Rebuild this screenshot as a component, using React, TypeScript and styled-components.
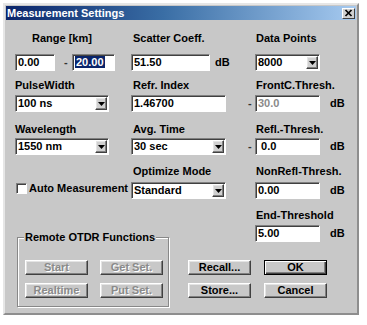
import React from 'react';
import styled, { createGlobalStyle, css } from 'styled-components';

const FONT = `"Liberation Sans", Arial, sans-serif`;

const Global = createGlobalStyle`
  html, body { margin: 0; padding: 0; background: #ffffff; }
  body { font-family: ${FONT}; font-size: 11px; }
  * { box-sizing: border-box; }
`;

const Page = styled.div`
  padding: 3px 0 0 3px;
`;

const Window = styled.div`
  width: 356px;
  border: 2px solid;
  border-color: #e6e6e6 #8e8e8e #8e8e8e #e6e6e6;
  padding: 1px;
  background: #c8c8c8;
`;

const TitleBar = styled.div`
  height: 14px;
  display: flex;
  align-items: center;
  justify-content: space-between;
  background: linear-gradient(to right, #0a246a 0%, #3a6ea5 45%, #a6caf0 100%);
  padding: 0 1px 0 1px;
`;

const TitleText = styled.span`
  color: #ffffff;
  font: bold 11px/14px ${FONT};
  padding-left: 0;
`;

const CloseBtn = styled.div`
  width: 13px;
  height: 11px;
  background: #d0d0d0;
  border: 1px solid;
  border-color: #ffffff #404040 #404040 #ffffff;
  display: flex;
  align-items: center;
  justify-content: center;
`;

const Body = styled.div`
  padding: 12px 0 5px 9px;
`;

const Grid = styled.div`
  display: grid;
  grid-template-columns: 116px 117px 1fr;
  grid-template-rows: 47px 44px 42px 34px;
`;

const Field = styled.div`
  display: flex;
  flex-direction: column;
  align-items: flex-start;
`;

const Label = styled.div<{ $indent?: number; $gap: number }>`
  height: 13px;
  font: bold 11px/13px ${FONT};
  color: #000;
  white-space: nowrap;
  margin-left: ${(p) => p.$indent ?? 0}px;
  margin-bottom: ${(p) => p.$gap}px;
`;

const Line = styled.div`
  display: flex;
  align-items: center;
  height: 17px;
`;

const sunken = css`
  border: 1px solid;
  border-color: #808080 #ffffff #ffffff #808080;
  box-shadow: inset 1px 1px 0 #404040;
`;

const raised = css`
  border: 1px solid;
  border-color: #ffffff #404040 #404040 #ffffff;
  box-shadow: inset -1px -1px 0 #808080, inset 1px 1px 0 #e4e4e4;
`;

const TextBox = styled.div<{ $w: number; $disabled?: boolean }>`
  width: ${(p) => p.$w}px;
  height: 17px;
  ${sunken};
  background: #ffffff;
  font: bold 11px/15px ${FONT};
  color: ${(p) => (p.$disabled ? '#8a8a8a' : '#000')};
  padding-left: 2px;
  white-space: nowrap;
  overflow: hidden;
`;

const Selected = styled.span`
  background: #0a246a;
  color: #ffffff;
  padding: 0 1px;
`;

const SelectBox = styled.div<{ $w: number }>`
  width: ${(p) => p.$w}px;
  height: 17px;
  ${sunken};
  background: #ffffff;
  display: flex;
  align-items: stretch;
  padding: 1px 1px 1px 0;
`;

const SelectText = styled.div`
  flex: 1;
  font: bold 11px/13px ${FONT};
  color: #000;
  padding-left: 2px;
  white-space: nowrap;
`;

const DropBtn = styled.div`
  width: 12px;
  background: #d0d0d0;
  ${raised};
  display: flex;
  align-items: center;
  justify-content: center;
`;

const Dash = styled.span<{ $w: number; $pad: number }>`
  width: ${(p) => p.$w}px;
  padding-left: ${(p) => p.$pad}px;
  font: bold 11px/17px ${FONT};
  color: #333;
`;

const Unit = styled.span<{ $gap: number }>`
  margin-left: ${(p) => p.$gap}px;
  font: bold 11px/17px ${FONT};
  color: #000;
`;

const CheckRow = styled.div`
  margin-top: 18px;
  margin-left: 1px;
  display: flex;
  align-items: center;
  gap: 2px;
  height: 11px;
`;

const CheckBox = styled.div`
  width: 11px;
  height: 11px;
  background: #ffffff;
  ${sunken};
`;

const CheckLabel = styled.span`
  font: bold 11px/13px ${FONT};
  color: #000;
  white-space: nowrap;
`;

const Bottom = styled.div`
  display: flex;
  align-items: flex-start;
`;

const GroupBox = styled.div`
  position: relative;
  margin: 38px 0 0 2px;
  width: 152px;
  border: 1px solid #888888;
  box-shadow: 1px 1px 0 #ffffff, inset 1px 1px 0 #ffffff;
  padding: 22px 4px 8px 7px;
`;

const Legend = styled.span`
  position: absolute;
  top: -7px;
  left: 6px;
  padding: 0 1px;
  background: #c8c8c8;
  font: bold 11px/13px ${FONT};
  color: #000;
  white-space: nowrap;
`;

const ButtonGrid = styled.div<{ $colGap: number }>`
  display: grid;
  grid-template-columns: 63px 63px;
  column-gap: ${(p) => p.$colGap}px;
  row-gap: 8px;
`;

const Button = styled.div<{ $disabled?: boolean; $default?: boolean }>`
  height: 15px;
  background: #c8c8c8;
  ${raised};
  display: flex;
  align-items: center;
  justify-content: center;
  font: bold 11px/13px ${FONT};
  color: ${(p) => (p.$disabled ? '#8a8a8a' : '#000')};
  text-shadow: ${(p) => (p.$disabled ? '1px 1px 0 #ffffff' : 'none')};
  ${(p) =>
    p.$default &&
    css`
      border-color: #000;
      box-shadow: inset 1px 1px 0 #ffffff, inset -1px -1px 0 #404040, inset -2px -2px 0 #808080;
    `}
`;

const RightPane = styled.div`
  margin-left: 19px;
  display: flex;
  flex-direction: column;
`;

const EndField = styled(Field)`
  margin: 10px 0 18px 60px;
`;

const Arrow = () => (
  <svg width="7" height="4" viewBox="0 0 7 4">
    <polygon points="0,0 7,0 3.5,4" fill="#000" />
  </svg>
);

const Select = ({ w, value }: { w: number; value: string }) => (
  <SelectBox $w={w}>
    <SelectText>{value}</SelectText>
    <DropBtn>
      <Arrow />
    </DropBtn>
  </SelectBox>
);

export default function App() {
  return (
    <>
      <Global />
      <Page>
        <Window>
          <TitleBar>
            <TitleText>Measurement Settings</TitleText>
            <CloseBtn>
              <svg width="9" height="8" viewBox="0 0 9 8">
                <path d="M1.5 1 L7.5 7 M7.5 1 L1.5 7" stroke="#000" strokeWidth="1.7" />
              </svg>
            </CloseBtn>
          </TitleBar>
          <Body>
            <Grid>
              {/* Row 1 */}
              <Field>
                <Label $indent={17} $gap={9}>Range [km]</Label>
                <Line>
                  <TextBox $w={40}>0.00</TextBox>
                  <Dash $w={17} $pad={9}>-</Dash>
                  <TextBox $w={43}><Selected>20.00</Selected></TextBox>
                </Line>
              </Field>
              <Field>
                <Label $indent={2} $gap={9}>Scatter Coeff.</Label>
                <Line>
                  <TextBox $w={79}>51.50</TextBox>
                  <Unit $gap={5}>dB</Unit>
                </Line>
              </Field>
              <Field>
                <Label $indent={8} $gap={9}>Data Points</Label>
                <Line>
                  <Dash $w={7} $pad={0} />
                  <Select w={65} value="8000" />
                </Line>
              </Field>

              {/* Row 2 */}
              <Field>
                <Label $gap={3}>PulseWidth</Label>
                <Select w={94} value="100 ns" />
              </Field>
              <Field>
                <Label $indent={2} $gap={3}>Refr. Index</Label>
                <TextBox $w={95}>1.46700</TextBox>
              </Field>
              <Field>
                <Label $indent={8} $gap={3}>FrontC.Thresh.</Label>
                <Line>
                  <Dash $w={7} $pad={0}>-</Dash>
                  <TextBox $w={65} $disabled>30.0</TextBox>
                  <Unit $gap={10}>dB</Unit>
                </Line>
              </Field>

              {/* Row 3 */}
              <Field>
                <Label $gap={2}>Wavelength</Label>
                <Select w={94} value="1550 nm" />
              </Field>
              <Field>
                <Label $indent={2} $gap={2}>Avg. Time</Label>
                <Select w={95} value="30 sec" />
              </Field>
              <Field>
                <Label $indent={8} $gap={2}>Refl.-Thresh.</Label>
                <Line>
                  <Dash $w={7} $pad={0}>-</Dash>
                  <TextBox $w={65}>&nbsp;0.0</TextBox>
                  <Unit $gap={10}>dB</Unit>
                </Line>
              </Field>

              {/* Row 4 */}
              <Field>
                <CheckRow>
                  <CheckBox />
                  <CheckLabel>Auto Measurement</CheckLabel>
                </CheckRow>
              </Field>
              <Field>
                <Label $indent={2} $gap={4}>Optimize Mode</Label>
                <Select w={95} value="Standard" />
              </Field>
              <Field>
                <Label $indent={8} $gap={4}>NonRefl-Thresh.</Label>
                <Line>
                  <Dash $w={7} $pad={0} />
                  <TextBox $w={65}>0.00</TextBox>
                  <Unit $gap={10}>dB</Unit>
                </Line>
              </Field>
            </Grid>

            <Bottom>
              <GroupBox>
                <Legend>Remote OTDR Functions</Legend>
                <ButtonGrid $colGap={12}>
                  <Button $disabled>Start</Button>
                  <Button $disabled>Get Set.</Button>
                  <Button $disabled>Realtime</Button>
                  <Button $disabled>Put Set.</Button>
                </ButtonGrid>
              </GroupBox>
              <RightPane>
                <EndField>
                  <Label $indent={8} $gap={3}>End-Threshold</Label>
                  <Line>
                    <Dash $w={7} $pad={0} />
                    <TextBox $w={65}>5.00</TextBox>
                    <Unit $gap={10}>dB</Unit>
                  </Line>
                </EndField>
                <ButtonGrid $colGap={13}>
                  <Button>Recall...</Button>
                  <Button $default>OK</Button>
                  <Button>Store...</Button>
                  <Button>Cancel</Button>
                </ButtonGrid>
              </RightPane>
            </Bottom>
          </Body>
        </Window>
      </Page>
    </>
  );
}
